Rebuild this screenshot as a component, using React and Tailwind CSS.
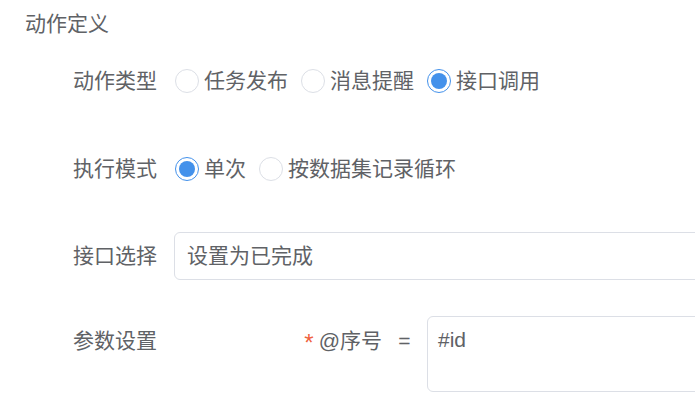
import React from "react";

const font = { fontFamily: '"Liberation Sans", "Noto Sans CJK SC", sans-serif' };

function Radio({ checked, label, last }) {
  return (
    <div className={"flex items-center " + (last ? "" : "mr-[13px]")}>
      {checked ? (
        <span className="w-[24px] h-[24px] rounded-full border border-[#4391eb] bg-white flex items-center justify-center">
          <span className="w-[16px] h-[16px] rounded-full bg-[#4391eb]" />
        </span>
      ) : (
        <span className="w-[24px] h-[24px] rounded-full border border-[#dcdfe6] bg-white" />
      )}
      <span className="ml-[5px] text-[21px] leading-[48px] text-[#606266]">{label}</span>
    </div>
  );
}

function Label({ children }) {
  return (
    <div className="w-[150px] shrink-0 pr-[18px] text-right text-[21px] leading-[48px] text-[#606266]">
      {children}
    </div>
  );
}

export default function App() {
  return (
    <div className="w-[695px] h-[415px] overflow-hidden bg-white" style={font}>
      <div className="w-[800px] pl-[25px]">
        <div className="h-[48px] text-[21px] leading-[48px] text-[#606266]">动作定义</div>

        <div className="mt-[9px] flex h-[48px]">
          <Label>动作类型</Label>
          <div className="flex items-center">
            <Radio label="任务发布" />
            <Radio label="消息提醒" />
            <Radio checked label="接口调用" last />
          </div>
        </div>

        <div className="mt-[40px] flex h-[48px]">
          <Label>执行模式</Label>
          <div className="flex items-center">
            <Radio checked label="单次" />
            <Radio label="按数据集记录循环" last />
          </div>
        </div>

        <div className="mt-[39px] flex h-[48px]">
          <Label>接口选择</Label>
          <div className="flex-1 -ml-[1px] h-[48px] rounded-[6px] border border-[#dcdfe6] pl-[12px] text-[21px] leading-[46px] text-[#606266]">
            设置为已完成
          </div>
        </div>

        <div className="mt-[37px] flex">
          <Label>参数设置</Label>
          <div className="flex flex-1">
            <div className="w-[207px] flex justify-end items-start h-[48px]">
              <span className="text-[#f0623e] text-[24px] leading-[52px] mr-[5px]">*</span>
              <span className="text-[21px] leading-[48px] text-[#606266]">@序号</span>
            </div>
            <div className="w-[45px] text-center text-[21px] leading-[48px] text-[#606266]">=</div>
            <div className="flex-1 -mt-[1px] h-[76px] rounded-[6px] border border-[#dcdfe6] pl-[10px] pt-[7px] text-[21px] leading-[32px] text-[#606266]">
              #id
            </div>
          </div>
        </div>
      </div>
    </div>
  );
}
